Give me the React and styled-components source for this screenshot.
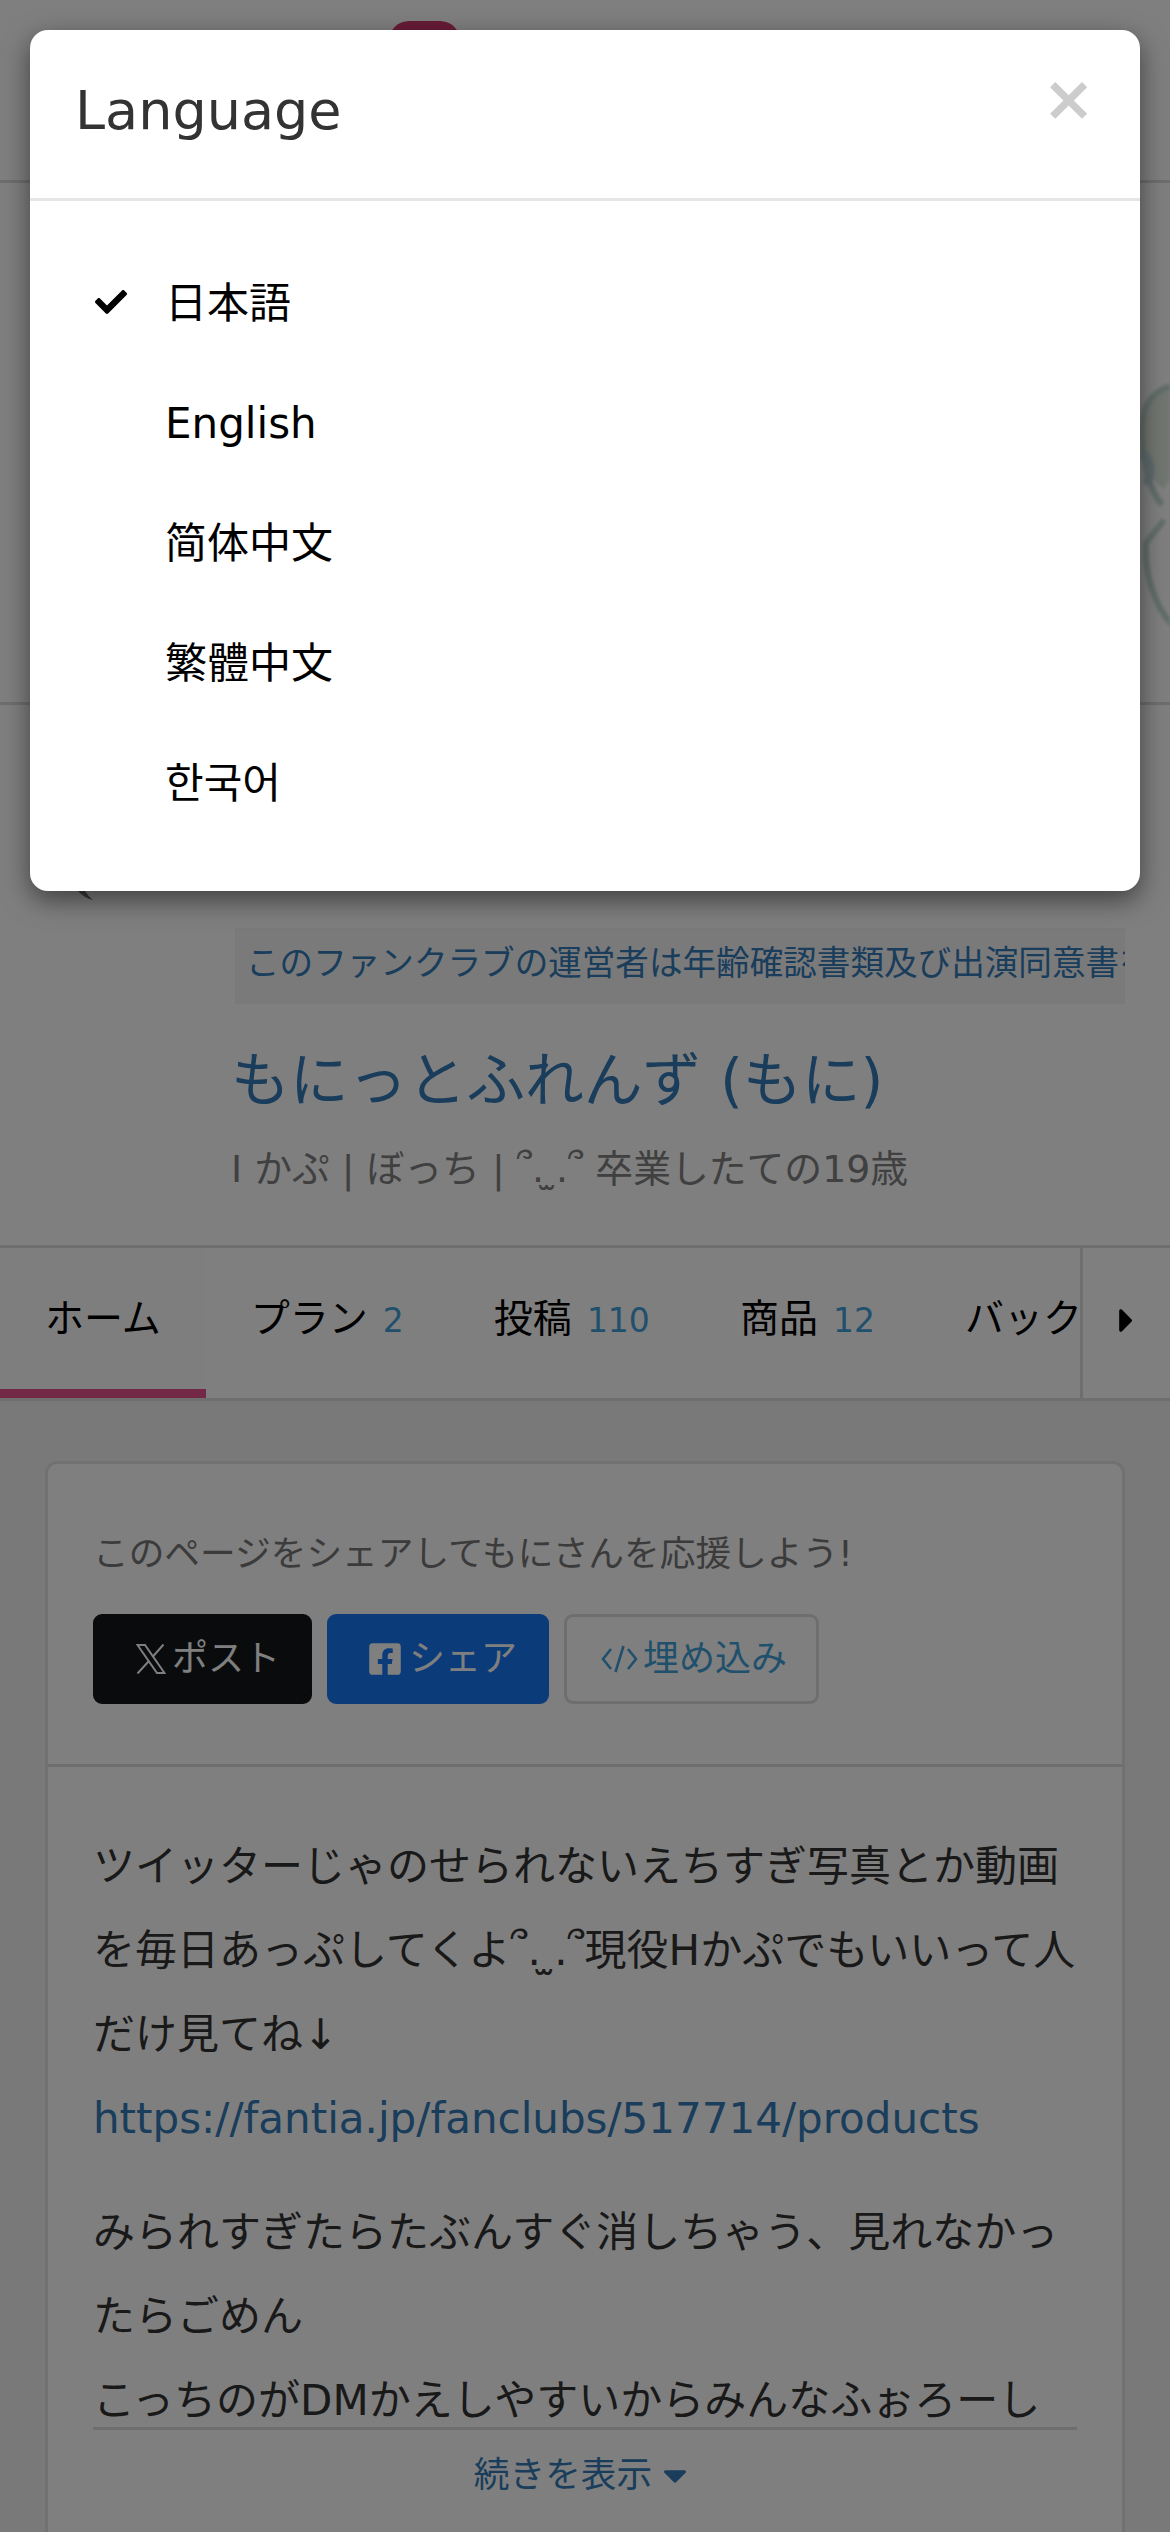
import React from "react";
import styled, { createGlobalStyle } from "styled-components";
import { FaCheck, FaCaretRight, FaCaretDown, FaFacebookSquare } from "react-icons/fa";

const GlobalStyle = createGlobalStyle`
    * {
        box-sizing: border-box;
    }
    body {
        margin: 0;
        background: #f2f2f2;
        color: #333;
        font-family: "DejaVu Sans", "Noto Sans CJK JP", sans-serif;
        font-size: 42px;
        overflow: hidden;
    }
    svg {
        display: block;
        flex-shrink: 0;
    }
`;

const Page = styled.div`
    position: relative;
    display: flex;
    flex-direction: column;
    width: 1170px;
    height: 2532px;
    overflow: hidden;
    white-space: nowrap;
`;

const SiteHeader = styled.header`
    height: 183px;
    flex-shrink: 0;
    padding: 21px 0 0 389px;
    background: #fff;
    border-bottom: 3px solid #ddd;
`;

const Badge = styled.div`
    width: 71px;
    height: 48px;
    border-radius: 20px;
    background: #d0386f;
`;

const Cover = styled.div`
    display: flex;
    justify-content: flex-end;
    height: 522px;
    flex-shrink: 0;
    background: #fff;
    border-bottom: 3px solid #ddd;
`;

const Profile = styled.section`
    height: 540px;
    flex-shrink: 0;
    padding: 186px 45px 0 78px;
    background: #fff;
`;

const ProfileText = styled.div`
    padding-left: 153px;
`;

const Notice = styled.div`
    height: 76px;
    margin: 28px 0 0 4px;
    padding-left: 11px;
    overflow: hidden;
    background: #f5f5f5;
    color: #337ab7;
    font-size: 33.6px;
    line-height: 72px;
`;

const ClubName = styled.h1`
    margin: 35px 0 0;
    color: #337ab7;
    font-size: 58.8px;
    font-weight: normal;
    line-height: 84px;
`;

const Tagline = styled.p`
    margin: 19px 0 0;
    color: #808080;
    font-size: 37.8px;
    line-height: 54px;
`;

const TabBar = styled.nav`
    display: flex;
    height: 156px;
    flex-shrink: 0;
    background: #fff;
    border-top: 3px solid #ddd;
    border-bottom: 3px solid #ddd;
`;

const TabList = styled.div`
    display: flex;
    flex: 1;
    overflow: hidden;
`;

const Tab = styled.div`
    display: flex;
    align-items: baseline;
    flex-shrink: 0;
    gap: 15px;
    padding: 41px 45px 0;
    color: #000;
    font-size: 39px;
    line-height: 60px;
    background: ${props => props.$active ? "#fcfcfc" : "#fff"};
    border-bottom: 9px solid ${props => props.$active ? "#e6508b" : "transparent"};
`;

const Count = styled.span`
    color: #41a0d9;
    font-size: 33px;
`;

const TabNext = styled.div`
    display: flex;
    align-items: center;
    width: 90px;
    padding: 0 0 5px 24px;
    color: #000;
    border-left: 3px solid #ddd;
`;

const Main = styled.main`
    flex: 1;
    padding: 60px 45px 0;
`;

const Card = styled.section`
    height: 1200px;
    background: #fff;
    border: 3px solid #e3e3e3;
    border-radius: 12px;
`;

const Share = styled.div`
    height: 303px;
    padding: 63px 45px 0;
    border-bottom: 3px solid #ddd;
`;

const ShareTitle = styled.div`
    color: #777;
    font-size: 35.7px;
    line-height: 54px;
`;

const ShareButtons = styled.div`
    display: flex;
    gap: 15px;
    margin-top: 33px;
`;

const ShareButton = styled.div`
    display: flex;
    align-items: center;
    gap: ${props => props.$gap};
    width: ${props => props.$width};
    height: 90px;
    padding: 0 0 1px ${props => props.$pad};
    border: 3px solid ${props => props.$border || props.$bg};
    border-radius: 9px;
    background: ${props => props.$bg};
    color: ${props => props.$fg};
    font-size: 36px;
    line-height: 54px;
`;

const Description = styled.div`
    height: 663px;
    margin: 0 45px;
    padding-top: 58px;
    overflow: hidden;
    border-bottom: 3px solid #ddd;
    line-height: 84px;
`;

const Paragraph = styled.p`
    margin: 0 0 30px;
`;

const Link = styled.a`
    color: #337ab7;
`;

const ShowMore = styled.div`
    display: flex;
    align-items: center;
    justify-content: center;
    gap: 4px;
    margin-top: 18px;
    padding-right: 2px;
    color: #337ab7;
    font-size: 35.7px;
    line-height: 54px;
`;

const Backdrop = styled.div`
    position: absolute;
    top: 0;
    left: 0;
    width: 1170px;
    height: 2532px;
    padding: 30px;
    background: rgba(0, 0, 0, 0.5);
`;

const Modal = styled.div`
    height: 861px;
    background: #fff;
    border-radius: 18px;
    box-shadow: 0 9px 27px rgba(0, 0, 0, 0.5);
`;

const ModalHeader = styled.div`
    display: flex;
    justify-content: space-between;
    height: 171px;
    padding: 42px 45px 0;
    border-bottom: 3px solid #e5e5e5;
`;

const ModalTitle = styled.div`
    font-size: 54px;
    line-height: 77px;
`;

const Close = styled.div`
    margin-top: -5px;
    color: #ccc;
    font-size: 63px;
    font-weight: bold;
    line-height: 63px;
`;

const LanguageList = styled.div`
    display: flex;
    flex-direction: column;
    padding: 45px 60px;
    color: #000;
    line-height: 60px;
`;

const Language = styled.div`
    display: flex;
    align-items: center;
    height: 120px;
    padding-bottom: 4px;
`;

const CheckSlot = styled.div`
    width: 75px;
    padding: 0 0 5px 5px;
`;

const XLogo = () => (
    <svg width="30" height="30" viewBox="0 0 30 30" fill="none" stroke="currentColor" strokeWidth="2">
        <path d="M1.5 1H9L28.5 29H21Z" />
        <path d="M27.5 .5L16.5 13M13 17L1.5 29.5" />
    </svg>
);

const CodeIcon = () => (
    <svg width="37" height="28" viewBox="0 0 37 28" fill="none" stroke="currentColor" strokeWidth="2.6">
        <path d="M10 4L2 14L10 24M27 4L35 14L27 24M22.5 1L14.5 27" />
    </svg>
);

const CoverImage = styled.svg`
    filter: blur(1.5px);
`;

const CoverArt = () => (
    <CoverImage width="60" height="519" viewBox="0 0 60 519" fill="none">
        <path d="M60 203C38 211 32 226 32 247C33 280 40 296 54 306L60 296Z" fill="#e4ece3" />
        <path d="M60 203C38 211 32 226 32 247C33 280 38 305 52 322" stroke="#c4dcd4" strokeWidth="6" />
        <path d="M31 270C40 275 43 287 37 302" stroke="#bfd5d8" strokeWidth="9" />
        <path d="M54 337L36 360C34 389 44 422 62 442" stroke="#c4dcd4" strokeWidth="6" />
    </CoverImage>
);

const AvatarEdge = () => (
    <svg width="15" height="9" viewBox="0 0 15 9">
        <path d="M0 0H7Q10 5 15 9Q6 7 0 0Z" fill="#777" />
    </svg>
);

const tabs = [
    { label: "ホーム", active: true },
    { label: "プラン", count: 2 },
    { label: "投稿", count: 110 },
    { label: "商品", count: 12 },
    { label: "バックナンバー" },
];

const languages = [
    { label: "日本語", lang: "ja", selected: true },
    { label: "English", lang: "en" },
    { label: "简体中文", lang: "zh-CN" },
    { label: "繁體中文", lang: "zh-TW" },
    { label: "한국어", lang: "ko" },
];

const LanguageModal = () => (
    <Modal>
        <ModalHeader>
            <ModalTitle>Language</ModalTitle>
            <Close>×</Close>
        </ModalHeader>
        <LanguageList>
            {languages.map(({ label, lang, selected }) => (
                <Language key={lang}>
                    <CheckSlot>{selected && <FaCheck size={32} />}</CheckSlot>
                    {label}
                </Language>
            ))}
        </LanguageList>
    </Modal>
);

const App = () => (
    <>
        <GlobalStyle />
        <Page lang="ja">
            <SiteHeader>
                <Badge />
            </SiteHeader>
            <Cover>
                <CoverArt />
            </Cover>
            <Profile>
                <AvatarEdge />
                <ProfileText>
                    <Notice>このファンクラブの運営者は年齢確認書類及び出演同意書を提出しています</Notice>
                    <ClubName>もにっとふれんず (もに)</ClubName>
                    <Tagline>I かぷ | ぼっち | ՞. ̫.՞ 卒業したての19歳</Tagline>
                </ProfileText>
            </Profile>
            <TabBar>
                <TabList>
                    {tabs.map(({ label, count, active }) => (
                        <Tab key={label} $active={active}>
                            {label}
                            {count && <Count>{count}</Count>}
                        </Tab>
                    ))}
                </TabList>
                <TabNext>
                    <FaCaretRight size={39} />
                </TabNext>
            </TabBar>
            <Main>
                <Card>
                    <Share>
                        <ShareTitle>このページをシェアしてもにさんを応援しよう!</ShareTitle>
                        <ShareButtons>
                            <ShareButton $width="219px" $pad="40px" $gap="6px" $bg="#14171a" $fg="#fff">
                                <XLogo />
                                ポスト
                            </ShareButton>
                            <ShareButton $width="222px" $pad="37px" $gap="6px" $bg="#1877f2" $fg="#fff">
                                <FaFacebookSquare size={36} />
                                シェア
                            </ShareButton>
                            <ShareButton $width="255px" $pad="34px" $gap="5px" $bg="#fff" $fg="#41a0d9" $border="#ddd">
                                <CodeIcon />
                                埋め込み
                            </ShareButton>
                        </ShareButtons>
                    </Share>
                    <Description>
                        <Paragraph>
                            ツイッターじゃのせられないえちすぎ写真とか動画<br />
                            を毎日あっぷしてくよ՞. ̫.՞現役Hかぷでもいいって人<br />
                            だけ見てね↓<br />
                            <Link>https://fantia.jp/fanclubs/517714/products</Link>
                        </Paragraph>
                        <Paragraph>
                            みられすぎたらたぶんすぐ消しちゃう、見れなかっ<br />
                            たらごめん<br />
                            こっちのがDMかえしやすいからみんなふぉろーし
                        </Paragraph>
                    </Description>
                    <ShowMore>
                        続きを表示
                        <FaCaretDown size={38} />
                    </ShowMore>
                </Card>
            </Main>
            <Backdrop>
                <LanguageModal />
            </Backdrop>
        </Page>
    </>
);

export default App;
